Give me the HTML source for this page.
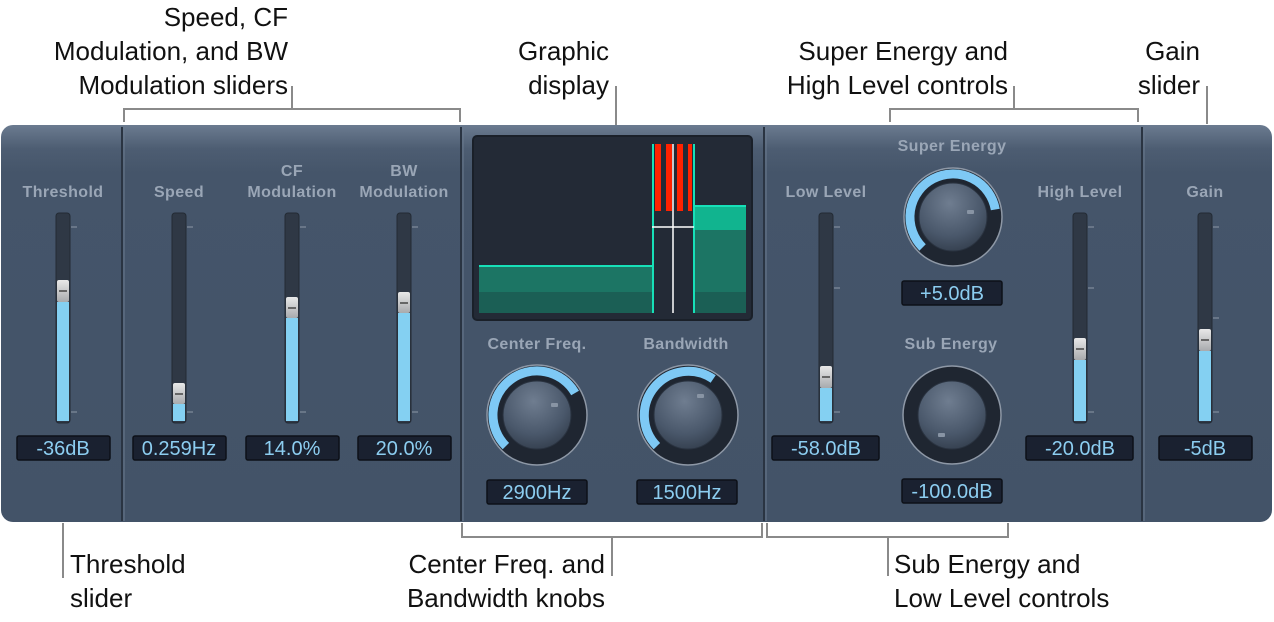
<!DOCTYPE html>
<html><head><meta charset="utf-8"><style>
html,body{margin:0;padding:0;background:#fff;width:1274px;height:622px;overflow:hidden}
svg{display:block}
.a{font-family:"Liberation Sans",sans-serif;font-size:26px;fill:#111}
.l{font-family:"Liberation Sans",sans-serif;font-size:16px;font-weight:bold;letter-spacing:0.4px;fill:#9aa6b6;text-anchor:middle}
.v{font-family:"Liberation Sans",sans-serif;font-size:20px;fill:#8ccdf0;text-anchor:middle}
</style></head><body>
<svg width="1274" height="622" viewBox="0 0 1274 622" xmlns="http://www.w3.org/2000/svg">
<defs>
<linearGradient id="pg" x1="0" y1="0" x2="0" y2="1">
<stop offset="0" stop-color="#6b7b90"/><stop offset="0.06" stop-color="#4d5d72"/><stop offset="0.12" stop-color="#45556a"/><stop offset="1" stop-color="#435368"/></linearGradient>
<radialGradient id="kg" cx="0.45" cy="0.3" r="0.8">
<stop offset="0" stop-color="#6f7d90"/><stop offset="0.6" stop-color="#4a586b"/><stop offset="1" stop-color="#2e3846"/></radialGradient>
<linearGradient id="th" x1="0" y1="0" x2="0" y2="1"><stop offset="0" stop-color="#e8e8e8"/><stop offset="1" stop-color="#a8aaad"/></linearGradient>
<g id="tk"><rect x="-7" y="0" width="14" height="210" rx="3" fill="#2f3845" stroke="#232a34"/></g>
</defs>
<g fill="none" stroke="#8a8a8a" stroke-width="2">
<path d="M124 122V109H460V122M292 109V86"/>
<path d="M616 86V134"/>
<path d="M890 122V109H1138V122M1014 109V86"/>
<path d="M1207 86V124"/>
<path d="M63 523V578"/>
<path d="M462 523V537H762V523M612 537V576"/>
<path d="M767 523V537H1008V523M888 537V576"/>
</g>
<g class="a">
<text x="288" y="26" text-anchor="end">Speed, CF</text>
<text x="288" y="60" text-anchor="end">Modulation, and BW</text>
<text x="288" y="94" text-anchor="end">Modulation sliders</text>
<text x="609" y="60" text-anchor="end">Graphic</text>
<text x="609" y="94" text-anchor="end">display</text>
<text x="1008" y="60" text-anchor="end">Super Energy and</text>
<text x="1008" y="94" text-anchor="end">High Level controls</text>
<text x="1200" y="60" text-anchor="end">Gain</text>
<text x="1200" y="94" text-anchor="end">slider</text>
<text x="70" y="573">Threshold</text>
<text x="70" y="607">slider</text>
<text x="605" y="573" text-anchor="end">Center Freq. and</text>
<text x="605" y="607" text-anchor="end">Bandwidth knobs</text>
<text x="894" y="573">Sub Energy and</text>
<text x="894" y="607">Low Level controls</text>
</g>
<rect x="1" y="125" width="1271" height="397" rx="12" fill="url(#pg)"/>
<g stroke="#2a3442" stroke-width="2"><path d="M122 127V521M461 127V521M764 127V521M1142 127V521"/></g>
<g stroke="#6a7a8e" stroke-width="1"><path d="M124 127V521M463 127V521M766 127V521M1144 127V521"/></g>
<g>
<text class="l" x="63" y="197">Threshold</text>
<text class="l" x="179" y="197">Speed</text>
<text class="l" x="292" y="176">CF</text><text class="l" x="292" y="197">Modulation</text>
<text class="l" x="404" y="176">BW</text><text class="l" x="404" y="197">Modulation</text>
<text class="l" x="826" y="197">Low Level</text>
<text class="l" x="1080" y="197">High Level</text>
<text class="l" x="1205" y="197">Gain</text>
<text class="l" x="537" y="349">Center Freq.</text>
<text class="l" x="686" y="349">Bandwidth</text>
<text class="l" x="952" y="151">Super Energy</text>
<text class="l" x="951" y="349">Sub Energy</text>
</g>
<g stroke="#8d98a6" stroke-width="1">
<path d="M71 227h6M71 412h6M187 227h6M187 412h6M300 227h6M300 412h6M412 227h6M412 412h6M834 227h6M834 288h6M834 412h6M1088 227h6M1088 288h6M1088 412h6M1213 227h6M1213 318h6M1213 412h6"/>
</g>
<g>
<use href="#tk" x="63" y="213"/><rect x="57" y="302" width="12" height="119" fill="#84d0f2"/><rect x="57" y="280" width="12" height="22" rx="2" fill="url(#th)"/><rect x="59" y="290" width="8" height="2" fill="#666"/>
<use href="#tk" x="179" y="213"/><rect x="173" y="404" width="12" height="17" fill="#84d0f2"/><rect x="173" y="383" width="12" height="21" rx="2" fill="url(#th)"/><rect x="175" y="393" width="8" height="2" fill="#666"/>
<use href="#tk" x="292" y="213"/><rect x="286" y="318" width="12" height="103" fill="#84d0f2"/><rect x="286" y="297" width="12" height="21" rx="2" fill="url(#th)"/><rect x="288" y="307" width="8" height="2" fill="#666"/>
<use href="#tk" x="404" y="213"/><rect x="398" y="313" width="12" height="108" fill="#84d0f2"/><rect x="398" y="292" width="12" height="21" rx="2" fill="url(#th)"/><rect x="400" y="302" width="8" height="2" fill="#666"/>
<use href="#tk" x="826" y="213"/><rect x="820" y="388" width="12" height="33" fill="#84d0f2"/><rect x="820" y="366" width="12" height="22" rx="2" fill="url(#th)"/><rect x="822" y="376" width="8" height="2" fill="#666"/>
<use href="#tk" x="1080" y="213"/><rect x="1074" y="360" width="12" height="61" fill="#84d0f2"/><rect x="1074" y="338" width="12" height="22" rx="2" fill="url(#th)"/><rect x="1076" y="348" width="8" height="2" fill="#666"/>
<use href="#tk" x="1205" y="213"/><rect x="1199" y="351" width="12" height="70" fill="#84d0f2"/><rect x="1199" y="329" width="12" height="22" rx="2" fill="url(#th)"/><rect x="1201" y="339" width="8" height="2" fill="#666"/>
</g>
<g fill="#1a2130" stroke="#0d1118" stroke-width="1.5">
<rect x="17" y="436" width="93" height="24" rx="2"/><rect x="133" y="436" width="93" height="24" rx="2"/>
<rect x="246" y="436" width="93" height="24" rx="2"/><rect x="358" y="436" width="93" height="24" rx="2"/>
<rect x="772" y="436" width="107" height="24" rx="2"/><rect x="1026" y="436" width="107" height="24" rx="2"/>
<rect x="1159" y="436" width="93" height="24" rx="2"/>
<rect x="487" y="480" width="100" height="24" rx="2"/><rect x="637" y="480" width="100" height="24" rx="2"/>
<rect x="902" y="281" width="100" height="24" rx="2"/><rect x="902" y="479" width="100" height="24" rx="2"/>
</g>
<g class="v">
<text x="63" y="455">-36dB</text><text x="179" y="455">0.259Hz</text><text x="292" y="455">14.0%</text><text x="404" y="455">20.0%</text>
<text x="826" y="455">-58.0dB</text><text x="1080" y="455">-20.0dB</text><text x="1205" y="455">-5dB</text>
<text x="537" y="499">2900Hz</text><text x="687" y="499">1500Hz</text>
<text x="952" y="300">+5.0dB</text><text x="952" y="498">-100.0dB</text>
</g>
<rect x="473" y="136" width="279" height="184" rx="4" fill="#232a36" stroke="#1a2029" stroke-width="2"/>
<rect x="479" y="266" width="173" height="47" fill="#1c7564"/><rect x="479" y="292" width="173" height="21" fill="#1b5f55"/>
<path d="M479 266H652" stroke="#17e0b8" stroke-width="2"/>
<rect x="694" y="206" width="52" height="107" fill="#1c7564"/><rect x="694" y="206" width="52" height="24" fill="#11b48f"/><rect x="694" y="292" width="52" height="21" fill="#1b5f55"/>
<path d="M694 206H746" stroke="#17e0b8" stroke-width="2"/>
<g fill="#ff2200"><rect x="655" y="144" width="6" height="67"/><rect x="666" y="144" width="6" height="67"/><rect x="677" y="144" width="6" height="67"/><rect x="688" y="144" width="4" height="67"/></g>
<path d="M653 144V313M694 144V313" stroke="#17e0b8" stroke-width="2"/>
<path d="M673 144V313M652 227H694" stroke="#fff" stroke-width="1.5"/>
<g>
<circle cx="537" cy="415" r="50" fill="#1f2631" stroke="#8e98a6" stroke-width="1.5"/>
<path d="M505.9 446.1A44 44 0 1 1 575.1 393" fill="none" stroke="#7ec9f5" stroke-width="9"/>
<circle cx="537" cy="415" r="34" fill="url(#kg)" stroke="#2a3340"/>
<rect x="551" y="403" width="7" height="4" rx="1" fill="#8894a4"/>
<circle cx="688" cy="415" r="50" fill="#1f2631" stroke="#8e98a6" stroke-width="1.5"/>
<path d="M656.9 446.1A44 44 0 0 1 713.2 379" fill="none" stroke="#7ec9f5" stroke-width="9"/>
<circle cx="688" cy="415" r="34" fill="url(#kg)" stroke="#2a3340"/>
<rect x="697" y="394" width="7" height="4" rx="1" fill="#8894a4"/>
<circle cx="953" cy="217" r="49" fill="#1f2631" stroke="#8e98a6" stroke-width="1.5"/>
<path d="M922.6 247.4A43 43 0 1 1 995.3 209.5" fill="none" stroke="#7ec9f5" stroke-width="9"/>
<circle cx="953" cy="217" r="34" fill="url(#kg)" stroke="#2a3340"/>
<rect x="967" y="210" width="7" height="4" rx="1" fill="#8894a4"/>
<circle cx="952" cy="415" r="49" fill="#1f2631" stroke="#8e98a6" stroke-width="1.5"/>
<circle cx="952" cy="415" r="34" fill="url(#kg)" stroke="#2a3340"/>
<rect x="938" y="433" width="7" height="4" rx="1" fill="#8894a4"/>
</g>
</svg>
</body></html>
